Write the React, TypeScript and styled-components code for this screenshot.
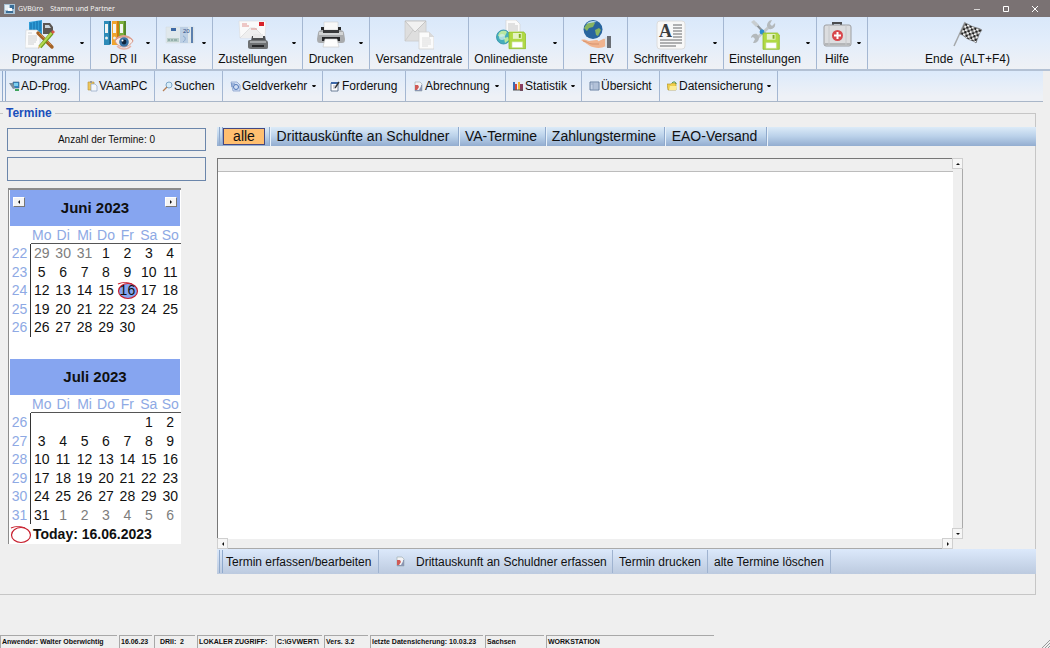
import React from "react";
import styled, { createGlobalStyle } from "styled-components";

const GlobalStyle = createGlobalStyle`
  *, *::before, *::after { box-sizing: border-box; }
  body {
    margin: 0;
    background: #efefef;
    font-family: "Liberation Sans", Arial, sans-serif;
    font-size: 12px;
    line-height: 14px;
    color: #101010;
  }
  button, input { font: inherit; color: inherit; padding: 0; margin: 0; border: 0; background: none; }
  svg { display: block; flex: none; }
`;

const Window = styled.div`
  min-height: 100vh;
  display: flex;
  flex-direction: column;
`;

/* ---------- title bar ---------- */

const TitleBar = styled.header`
  height: 17px;
  flex: none;
  display: flex;
  align-items: center;
  gap: 3px;
  padding-left: 4px;
  background: #7a7273;
  color: #f4f2f2;
  font-family: "Noto Sans", "Open Sans", sans-serif;
  font-size: 7px;
  line-height: 16px;
`;

const TitleText = styled.span`
  margin-right: 4px;
`;

const WindowButtons = styled.div`
  margin-left: auto;
  display: flex;
  padding-right: 1px;
`;

const WindowButton = styled.button`
  width: 29px;
  height: 16px;
  display: flex;
  align-items: center;
  justify-content: center;
`;

/* ---------- main toolbar ---------- */

const MainToolbar = styled.nav`
  display: flex;
  flex: none;
  height: 54px;
  background: linear-gradient(#d9e8fa, #e2edfb 45%, #eff1f5);
  border-bottom: 2px solid #b3c1d4;
`;

const BigButton = styled.button<{ $width: number }>`
  flex: none;
  width: ${(p) => p.$width}px;
  display: flex;
  align-items: center;
  border-right: 1px solid #a4b7d2;
`;

const EndButton = styled.button`
  flex: 1;
  display: flex;
  align-items: center;
  padding-left: 17px;
`;

const BigBody = styled.span`
  flex: 1;
  display: flex;
  flex-direction: column;
  align-items: center;
  gap: 2px;
  white-space: nowrap;
`;

const BigLabel = styled.span<{ $lead?: number }>`
  padding-left: ${(p) => p.$lead ?? 0}px;
  white-space: pre;
`;

const Arrow = styled.span`
  flex: none;
  width: 4px;
  height: 2px;
  margin-right: 6px;
  background: #111;
  clip-path: polygon(0 0, 100% 0, 75% 100%, 25% 100%);
`;

/* ---------- second toolbar ---------- */

const SubToolbar = styled.nav`
  display: flex;
  flex: none;
  height: 31px;
  margin-right: 7px;
  padding-left: 2px;
  background: linear-gradient(#dceafb, #eef1f6 85%);
  border-bottom: 1px solid #a9b6c8;
`;

const Grip = styled.span`
  flex: none;
  width: 4px;
  border-left: 1px solid #8fa9cc;
  border-right: 1px solid #8fa9cc;
`;

const SmallButton = styled.button<{ $width: number; $pad?: number }>`
  flex: none;
  width: ${(p) => p.$width}px;
  display: flex;
  align-items: center;
  gap: 1px;
  padding-left: ${(p) => p.$pad ?? 7}px;
  border-right: 1px solid #a4b7d2;
  white-space: nowrap;

  ${Arrow} { margin-left: auto; }
`;

/* ---------- group box ---------- */

const Group = styled.section`
  flex: 1;
  display: flex;
  flex-direction: column;
  min-width: 0;
  margin: 11px 14px 40px 0;
  padding: 0 0 20px 7px;
  border: 1px solid #c6c6c6;
  border-left: 0;
`;

const GroupTitle = styled.h1`
  align-self: flex-start;
  margin: -9px 0 6px -4px;
  padding: 0 3px;
  background: #efefef;
  font-size: 12px;
  line-height: 16px;
  color: #1c4fbb;
`;

const GroupBody = styled.div`
  flex: 1;
  display: flex;
  gap: 11px;
`;

const SidePanel = styled.aside`
  flex: none;
  width: 199px;
  display: flex;
  flex-direction: column;
  gap: 6px;
  padding-top: 1px;
`;

const CountBox = styled.output`
  height: 23px;
  border: 1px solid #6b86ab;
  font-size: 10px;
  line-height: 21px;
  text-align: center;
`;

const FilterBox = styled.input`
  && {
    height: 24px;
    border: 1px solid #6b86ab;
    outline: 0;
  }
`;

/* ---------- calendar ---------- */

const CalendarBox = styled.section`
  width: 173px;
  margin: 1px 0 0 1px;
  border: 1px solid #8c8c8c;
  border-width: 2px 0 0 1px;
  background: #fff;
  font-size: 14px;
  line-height: 16px;
`;

const MonthHead = styled.div`
  height: 36px;
  display: flex;
  align-items: center;
  margin: 0 1px;
  padding: 0 3px;
  background: #86a5f0;
`;

const MonthName = styled.h2`
  flex: 1;
  margin: 0;
  font-size: 15px;
  line-height: 18px;
  text-align: center;
`;

const MonthNav = styled.button`
  && {
    width: 12px;
    height: 10px;
    margin-bottom: 12px;
    display: flex;
    align-items: center;
    justify-content: center;
    background: #f4f4f4;
    border: 1px solid #fff;
    border-right-color: #777;
    border-bottom-color: #777;
  }
`;

const MonthTable = styled.table`
  width: 172px;
  height: 129px;
  table-layout: fixed;
  border-collapse: separate;
  border-spacing: 0;
  text-align: center;

  th, td { padding: 0; font-weight: normal; }
  thead th { height: 18px; padding-top: 1px; color: #8ea9e4; }
  thead th + th { border-bottom: 1px solid #555; }
  tbody th { color: #8ea9e4; border-right: 1px solid #333; }
  tbody tr.blank th { border-right-color: transparent; }
`;

const WeekCol = styled.col`
  width: 22px;
`;

const Day = styled.td<{ $muted: boolean }>`
  color: ${(p) => (p.$muted ? "#7d7d7d" : "#111")};
`;

const TodayMark = styled.span`
  position: relative;
  display: inline-block;
  z-index: 0;

  svg {
    position: absolute;
    left: -3px;
    top: -2px;
    z-index: -1;
  }
`;

const MonthGap = styled.div`
  height: 4px;
`;

const TodayLine = styled.p`
  display: flex;
  align-items: center;
  gap: 1px;
  height: 20px;
  margin: 0;
  padding-left: 1px;
  font-weight: bold;
`;

/* ---------- right side ---------- */

const ListPanel = styled.div`
  flex: 1;
  min-width: 0;
  display: flex;
  flex-direction: column;
  margin-right: -1px;
`;

const TabStrip = styled.div`
  flex: none;
  display: flex;
  height: 19px;
  margin-bottom: 12px;
  padding-left: 2px;
  background: linear-gradient(#dcebf8, #b9d0e9 50%, #93add0);
  font-size: 14px;
  line-height: 16px;
`;

const Tab = styled.button<{ $width: number }>`
  flex: none;
  width: ${(p) => p.$width}px;
  padding: 0 2px 1px 0;
  border-right: 1px solid #8fa9cc;
  box-shadow: 1px 0 #e8f1fa;
  white-space: nowrap;
`;

const ActiveTab = styled.span`
  display: block;
  margin-right: 2px;
  background: #ffbf70;
  border: 1px solid #45477f;
  line-height: 15px;
`;

const List = styled.div`
  flex: 1;
  display: grid;
  grid-template: minmax(0, 1fr) 10px / minmax(0, 1fr) 10px;
  margin-right: 73px;
  border-top: 1px solid #777;
  border-left: 1px solid #777;
`;

const ListView = styled.div`
  background: #fff;
`;

const ListHeader = styled.div`
  height: 13px;
  background: #efefef;
  border-bottom: 1px solid #bcbcbc;
`;

const ScrollBar = styled.div<{ $vertical?: boolean }>`
  display: flex;
  flex-direction: ${(p) => (p.$vertical ? "column" : "row")};
  justify-content: space-between;
  background: #efefef;
  border: 0 solid #aaa;
  border-width: 0 1px 1px 0;
`;

const ScrollButton = styled.button`
  && {
    width: 9px;
    height: 9px;
    display: flex;
    align-items: center;
    justify-content: center;
    background: #f6f6f6;
    box-shadow: 0 0 0 1px #cfcfcf;
  }
`;

const ActionStrip = styled.div`
  flex: none;
  display: flex;
  height: 25px;
  padding: 1px 0 1px 2px;
  background: linear-gradient(#dce9fb, #bccadf);
`;

const Action = styled.button<{ $width: number; $pad?: number }>`
  flex: none;
  width: ${(p) => p.$width}px;
  display: flex;
  align-items: center;
  gap: 10px;
  padding-left: ${(p) => p.$pad ?? 6}px;
  border-right: 1px solid #9fb3d0;
  white-space: nowrap;
`;

/* ---------- status bar ---------- */

const StatusBar = styled.footer`
  flex: none;
  display: flex;
  gap: 2px;
  height: 13px;
  font-size: 7px;
  font-weight: bold;
  line-height: 12px;
`;

const StatusCell = styled.span<{ $width: number }>`
  flex: none;
  width: ${(p) => p.$width}px;
  padding-left: 1px;
  border-top: 1px solid #a8a8a8;
  border-left: 1px solid #a8a8a8;
  white-space: pre;
`;

const SizeGrip = styled.span`
  margin-left: auto;
  align-self: flex-end;
`;

/* ---------- icons, 30 x 30 ---------- */

const Big = ({ children }: { children: React.ReactNode }) => (
  <svg width="30" height="30" viewBox="0 0 30 30" fill="none" aria-hidden="true">{children}</svg>
);

const ProgramsIcon = () => (
  <Big>
    <path d="M4 2 17 0v14L4 14Z" fill="#2f9cd6" />
    <path d="M6 3v9M9 2v10M12 1v10M15 1v10" stroke="#136ba8" strokeWidth="1" />
    <path d="M18 3h7l3 4v7H18Z" fill="#5b5653" />
    <path d="M20 5h4l2 3h-6Z" fill="#c8d4dc" />
    <path d="M1 10h11l3 3v15H0Z" fill="#fbfbfb" stroke="#cfd3d6" strokeWidth=".6" />
    <path d="M3 13h4M3 16h9M3 18h9M3 20h9M3 22h8M3 24h6" stroke="#c4c7c9" strokeWidth=".8" />
    <path d="m13 13 14 14" stroke="#a46226" strokeWidth="3.4" strokeLinecap="round" />
    <path d="m14 13 12 12" stroke="#d08a43" strokeWidth="1" />
    <path d="m27 13-12 14" stroke="#6c9a1d" strokeWidth="3.8" />
    <path d="m26.500 13-12 14" stroke="#b3d850" strokeWidth="2" />
    <path d="m15 27-2 2 1-4Z" fill="#d8a35a" />
    <path d="m26 12 2-2 2 2-2 2Z" fill="#d85848" />
  </Big>
);

const binders: [string, string, number][] = [
  ["#2d8bb8", "#1a6a92", 0],
  ["#f0a52e", "#c97f13", 8],
  ["#7cae3d", "#57872a", 15],
];

const BindersIcon = () => (
  <Big>
    {binders.map(([front, side, x]) => (
      <g key={x} transform={`translate(${x} 0)`}>
        <path d="M0 1h5v24H0Z" fill={front} />
        <path d="M5 1h2v23l-2 1Z" fill={side} />
        <path d="M1 4h3v9H1Z" fill="#f3f5f2" />
        <circle cx="2.500" cy="18" r="1.500" fill="#e8eeee" />
      </g>
    ))}
    <path d="M11 21c4-6 13-7 18 0-5 8-14 8-18 0Z" fill="#f6ebe7" stroke="#d7998a" strokeWidth="1" />
    <path d="M10 21c4-8 15-8 20 0-5-4-14-5-20 0Z" fill="#dd9c8c" />
    <circle cx="20" cy="22" r="4.800" fill="#3a72a4" />
    <circle cx="20" cy="22" r="2.400" fill="#10243c" />
    <circle cx="18.500" cy="20.500" r="1" fill="#fff" />
    <path d="M13 26c4 4 10 4 14 0" stroke="#e6b2a6" strokeWidth="1.500" />
  </Big>
);

const CashIcon = () => (
  <Big>
    <path d="M1 7h28v16H1Z" fill="#e0e8ec" stroke="#d0dade" strokeWidth=".5" />
    <path d="M15 7h8v16h-8Z" fill="#bccfe4" />
    <path d="M26 7h2v16h-2Z" fill="#5b7fae" />
    <path d="M6 8h5v3H6Z" fill="#3d69a5" />
    <path d="M2 18h12v4H2Z" fill="#b9cdc9" />
    <path d="M3 20h2m1 0h2m1 0h3" stroke="#71918e" />
    <text x="18" y="13" fontSize="6" fill="#2c4d82" fontFamily="Liberation Sans">20</text>
    <path d="M18 16c3 1 3 4 0 6" stroke="#8ba9cc" />
  </Big>
);

const DeliveryIcon = () => (
  <Big>
    <path d="M1 1h27l-1 17H2Z" fill="#fafafa" stroke="#d8dadb" strokeWidth=".6" />
    <path d="m2 18 10-10h5l10 10" fill="#efefef" stroke="#d3d3d3" strokeWidth=".6" />
    <path d="M21 2h5v4h-5Z" fill="#d8232a" />
    <path d="M4 4h5M4 6h7M13 9h6" stroke="#e08b86" strokeWidth=".9" />
    <path d="M14 16h13l1 5H13Z" fill="#4e5052" />
    <path d="M15 14h10v4H15Z" fill="#e9e9e9" />
    <path d="M10 22c0-2 1-2 3-2h14c2 0 3 1 3 3v4c0 2-1 2-3 2H13c-2 0-3-1-3-2Z" fill="#6e7173" />
    <path d="M12 21h16v2H12Z" fill="#a5a8aa" />
    <path d="M14 25h12v2H14Z" fill="#252628" />
  </Big>
);

const PrinterIcon = () => (
  <Big>
    <path d="M8 2h14v8H8Z" fill="#f8f8f8" stroke="#cfcfcf" strokeWidth=".6" />
    <path d="M5 7h3v4h14V7h3v6H5Z" fill="#28292b" />
    <path d="M2 13c0-2 2-3 4-3h2v3h14v-3h2c2 0 4 1 4 3l1 6c0 3-1 4-3 4H4c-2 0-3-1-3-4Z" fill="#a9abad" />
    <path d="M3 12h24v3H3Z" fill="#d2d4d5" />
    <path d="M7 10h16v3H7Z" fill="#38393b" />
    <path d="M6 17h18v4H6Z" fill="#232426" />
    <path d="M9 19h12l2 8H7Z" fill="#fdfdfd" stroke="#c6c6c6" strokeWidth=".6" />
  </Big>
);

const MailIcon = () => (
  <Big>
    <path d="M1 1h21v20H1Z" fill="#dedede" stroke="#cbcbcb" strokeWidth=".8" />
    <path d="m1 1 10 11L22 1Z" fill="#f1f1f1" stroke="#bdbdbd" strokeWidth=".8" />
    <path d="m1 21 8-11m13 11-8-11" stroke="#c8c8c8" strokeWidth=".8" />
    <path d="M15 12h10l5 5v12H15Z" fill="#fbfbfb" stroke="#d2d2d2" strokeWidth=".8" />
    <path d="M25 12v5h5Z" fill="#dadada" />
    <path d="M18 18h8M18 20h9M18 22h9M18 24h9M18 26h6" stroke="#d5d5d5" strokeWidth=".8" />
  </Big>
);

const Floppy = ({ x, y, s = 1 }: { x: number; y: number; s?: number }) => (
  <g transform={`translate(${x} ${y}) scale(${s})`}>
    <path d="M0 0h15l2 2v15H0Z" fill="#b0d944" stroke="#8dbb2b" strokeWidth=".8" />
    <path d="M4 1h9v6H4Z" fill="#e5f3c4" />
    <path d="M10 2h2v4h-2Z" fill="#80ad20" />
    <path d="M3 10h11v6H3Z" fill="#fff" stroke="#bfdc85" strokeWidth=".6" />
  </g>
);

const OnlineIcon = () => (
  <Big>
    <path d="M10 0h10l4 4v12H10Z" fill="#fafafa" stroke="#d2d2d2" strokeWidth=".7" />
    <path d="M12 4h7M12 6h10M12 8h10M12 10h10" stroke="#c1c1c1" strokeWidth=".9" />
    <circle cx="7.500" cy="17" r="7" fill="#46aebb" />
    <path d="M3 13c3-3 6-3 8-1l-2 4-4 1-3-1Zm5 5 4-1 1 3-4 3Z" fill="#b8e7a2" />
    <circle cx="7.500" cy="17" r="7" stroke="#2f8fa8" strokeWidth=".8" />
    <circle cx="6" cy="17" r="3" fill="#d6f1f4" opacity=".7" />
    <Floppy x={13} y={12} s={0.98} />
  </Big>
);

const ErvIcon = () => (
  <Big>
    <circle cx="12" cy="9.500" r="9.500" fill="#28659e" />
    <path d="M5 5c3-4 8-4 9-2l-2 4-4 1-2 3-3-3Zm9 5 4-2 2 2-3 6-2-1Z" fill="#86b462" />
    <path d="M5 4c3-3 8-4 11-2-4 0-8 1-11 2Z" fill="#b8daf2" />
    <path d="M0 20c3-1 5 0 8 1l7-1c3 0 3 2 1 2l6-3c3-1 3 1 2 2l1-1v6c-5 3-12 2-16 0Z" fill="#f0b48f" />
    <path d="M2 21c3 0 6 3 9 3h7" stroke="#d18c66" strokeWidth=".8" />
    <path d="M24 17h3v10h-3Z" fill="#dfe3e6" />
    <path d="M26 16h4v12h-4Z" fill="#6b6f75" />
  </Big>
);

const LetterIcon = () => (
  <Big>
    <rect x="1" y="1" width="28" height="28" rx="3" fill="#f8f8f8" stroke="#dcdcdc" />
    <text x="3" y="17" fontSize="18" fontWeight="bold" fill="#3b3d3f" fontFamily="Liberation Serif">A</text>
    <path d="M17 5h9M17 8h9M17 11h9M17 14h9M17 17h9M4 20h22M4 23h22M4 26h16" stroke="#66686a" strokeWidth="1.200" />
  </Big>
);

const SettingsIcon = () => (
  <Big>
    <path d="m5 3 16 17" stroke="#8d9397" strokeWidth="2.200" />
    <path d="M20 6 6 19" stroke="#c3c7c9" strokeWidth="3" />
    <path d="M17 6c0-3 2-6 5-6l-2 4 2 2 3-3c1 4-2 7-6 6M1 18c0-3 3-5 6-4l2 3c0 4-2 6-6 6l2-4-2-2Z" fill="#b4b9bc" />
    <path d="M1 2 4 0l5 5-3 2Z" fill="#c8cdd0" />
    <circle cx="12" cy="12" r="2.400" fill="#2c8fd0" />
    <Floppy x={13} y={13} s={0.96} />
  </Big>
);

const HelpIcon = () => (
  <Big>
    <path d="M11 5V3h8v2" stroke="#4b4d50" strokeWidth="2" />
    <rect x="2" y="5" width="27" height="21" rx="2" fill="#dcdddf" stroke="#9c9ea1" />
    <path d="M3 23h25v2H3Z" fill="#b4b6b8" />
    <path d="M7 5v20M24 5v20" stroke="#c6c8ca" />
    <circle cx="15.500" cy="15.500" r="5.500" fill="#d8474c" />
    <path d="M15.500 12v7M12 15.500h7" stroke="#fff" strokeWidth="2" />
  </Big>
);

const FlagIcon = () => (
  <Big>
    <defs>
      <pattern id="checker" width="5" height="5" patternUnits="userSpaceOnUse" patternTransform="rotate(24)">
        <rect width="5" height="5" fill="#f1f1f1" />
        <path d="M0 0h2.500v2.500H0ZM2.500 2.500H5V5H2.500Z" fill="#222" />
      </pattern>
    </defs>
    <path d="M12 2 1 26" stroke="#a5a8aa" strokeWidth="1.500" />
    <path d="M12 3c4 1 5 3 9 4 3 1 5 1 8 3-3 3-4 8-6 13-3-3-5-2-8-4-3-1-4-4-8-5Z" fill="url(#checker)" stroke="#555" strokeWidth=".5" />
  </Big>
);

/* ---------- icons, 11 x 11 ---------- */

const Small = ({ children }: { children: React.ReactNode }) => (
  <svg width="11" height="11" viewBox="0 0 11 11" fill="none" aria-hidden="true">{children}</svg>
);

const smallIcons: Record<string, React.ReactNode> = {
  ad: <Small><path d="M4 1h6v6H4Z" fill="#2e86c9" stroke="#48657c" strokeWidth=".6" /><path d="M5 2h4v3H5Z" fill="#7cd0f0" /><path d="M0 2h4l2 5-2 1Z" fill="#7b8e9c" /><path d="M6 8h4v2H6Z" fill="#3fa45c" /></Small>,
  paste: <Small><path d="M1 1h6v8H1Z" fill="#edc75c" stroke="#b8923a" strokeWidth=".6" /><path d="M3 0h2v2H3Z" fill="#999" /><path d="M4 3h4l2 2v5H4Z" fill="#f3f7fc" stroke="#8098b8" strokeWidth=".6" /></Small>,
  search: <Small><circle cx="7" cy="4" r="3" fill="#d7edfa" stroke="#7ca6c8" /><path d="M5 6 1 10" stroke="#b77f55" strokeWidth="1.300" /></Small>,
  money: <Small><path d="M1 1h6l3 3v6H3Z" fill="#d2dff3" stroke="#7c96c6" strokeWidth=".7" /><circle cx="6" cy="6" r="2.500" stroke="#5076b8" /><path d="M1 3h4M1 5h2" stroke="#5076b8" strokeWidth=".8" /></Small>,
  edit: <Small><path d="M1 2h7v8H1Z" fill="#fff" stroke="#4a5f7d" strokeWidth=".8" /><path d="M1 1h7v2H1Z" fill="#3f69a8" /><path d="m5 7 4-6" stroke="#333" strokeWidth="1.400" /><path d="M3 5h3M3 7h2" stroke="#889" strokeWidth=".7" /></Small>,
  report: <Small><path d="M2 1h5l2 2v7H2Z" fill="#f3f3f6" stroke="#9aa" strokeWidth=".6" /><path d="M2 4h3l1 2-2 3H2Z" fill="#cf5a55" /><path d="M7 7c1-1 1-2 1-3h1v6H2V9h4Z" fill="#8a96b2" /></Small>,
  chart: <Small><path d="M0 1h2v8H0Z" fill="#3d6cb5" /><path d="M2 3h2v6H2Z" fill="#d6443b" /><path d="M5 1h2v8H5Z" fill="#efb63b" /><path d="M7 3h3v7H7Z" fill="#8a3e60" /><path d="M0 9h10" stroke="#555" /></Small>,
  table: <Small><path d="M1 1h9v8H1Z" fill="#c6d3e6" stroke="#5e7698" strokeWidth=".9" /><path d="M1 3h9M4 1v8M4 5h6M4 7h6" stroke="#8ca0bd" strokeWidth=".7" /></Small>,
  backup: <Small><path d="M0 3h4l1-1h4v7H1Z" fill="#efcf4c" stroke="#a98a22" strokeWidth=".6" /><path d="M3 5h7l-1 4H2Z" fill="#fbec97" /><path d="M5 2c2-2 4-1 4 1" stroke="#3b8b3b" /></Small>,
};

const Ring = ({ filled }: { filled?: boolean }) => (
  <svg width="22" height="20" viewBox="0 0 22 20" fill="none" aria-hidden="true">
    <ellipse cx="11" cy="11" rx="9.500" ry="7.500" fill={filled ? "#86a5f0" : "none"} stroke="#c8202f" strokeWidth="1.200" />
    <path d="M1 4c4-2 10-2 14 0" stroke="#c8202f" strokeWidth="1.200" />
  </svg>
);

const Tri = ({ d }: { d: string }) => (
  <svg width="4" height="4" viewBox="0 0 4 4" aria-hidden="true"><path d={d} fill="#111" /></svg>
);
const UP = "M0 3h4L2 1Z";
const DOWN = "M0 1h4L2 3Z";
const LEFT = "M3 0v4L1 2Z";
const RIGHT = "M1 0v4l2-2Z";

/* ---------- data ---------- */

const mainItems = [
  { label: "Programme", width: 91, icon: <ProgramsIcon />, arrow: true, lead: 6 },
  { label: "DR II", width: 66, icon: <BindersIcon />, arrow: true, lead: 10 },
  { label: "Kasse", width: 56, icon: <CashIcon />, arrow: true },
  { label: "Zustellungen", width: 90, icon: <DeliveryIcon />, arrow: true },
  { label: "Drucken", width: 67, icon: <PrinterIcon />, arrow: true },
  { label: "Versandzentrale", width: 99, icon: <MailIcon /> },
  { label: "Onlinedienste", width: 95, icon: <OnlineIcon />, arrow: true },
  { label: "ERV", width: 64, icon: <ErvIcon />, lead: 12 },
  { label: "Schriftverkehr", width: 96, icon: <LetterIcon />, arrow: true },
  { label: "Einstellungen", width: 93, icon: <SettingsIcon />, arrow: true },
  { label: "Hilfe", width: 51, icon: <HelpIcon />, arrow: true },
];

const subItems = [
  { label: "AD-Prog.", width: 74, icon: "ad", pad: 3 },
  { label: "VAamPC", width: 75, icon: "paste" },
  { label: "Suchen", width: 68, icon: "search" },
  { label: "Geldverkehr", width: 100, icon: "money", arrow: true },
  { label: "Forderung", width: 83, icon: "edit" },
  { label: "Abrechnung", width: 100, icon: "report", arrow: true },
  { label: "Statistik", width: 76, icon: "chart", arrow: true },
  { label: "Übersicht", width: 78, icon: "table" },
  { label: "Datensicherung", width: 118, icon: "backup", arrow: true },
];

const tabs = [
  { label: "Drittauskünfte an Schuldner", width: 189 },
  { label: "VA-Termine", width: 87 },
  { label: "Zahlungstermine", width: 119 },
  { label: "EAO-Versand", width: 102 },
];

const statusItems: [string, number][] = [
  ["Anwender: Walter Oberwichtig", 117],
  ["16.06.23", 33],
  ["  DRII:  2", 41],
  ["LOKALER ZUGRIFF:", 76],
  ["C:\\GVWERT\\", 47],
  ["Vers. 3.2", 44],
  ["letzte Datensicherung: 10.03.23", 113],
  ["Sachsen", 59],
  ["WORKSTATION", 168],
];

type MonthData = { name: string; firstWeek: number; start: number; days: number; prev: number; trail: number; today?: number };

const months: MonthData[] = [
  { name: "Juni 2023", firstWeek: 22, start: 3, days: 30, prev: 31, trail: 0, today: 16 },
  { name: "Juli 2023", firstWeek: 26, start: 5, days: 31, prev: 0, trail: 6 },
];

const Month = ({ m, nav }: { m: MonthData; nav?: boolean }) => (
  <>
    <MonthHead>
      {nav && <MonthNav aria-label="Vorheriger Monat"><Tri d={LEFT} /></MonthNav>}
      <MonthName>{m.name}</MonthName>
      {nav && <MonthNav aria-label="Nächster Monat"><Tri d={RIGHT} /></MonthNav>}
    </MonthHead>
    <MonthTable aria-label={m.name}>
      <colgroup><WeekCol /></colgroup>
      <thead>
        <tr><th />{["Mo", "Di", "Mi", "Do", "Fr", "Sa", "So"].map((d) => <th key={d}>{d}</th>)}</tr>
      </thead>
      <tbody>
        {Array.from({ length: 6 }, (_, w) => {
          const blank = w * 7 - m.start >= m.days;
          return (
            <tr key={w} className={blank ? "blank" : undefined}>
              <th>{blank ? "\u00a0" : m.firstWeek + w}</th>
              {Array.from({ length: 7 }, (_, i) => {
                const n = w * 7 + i - m.start + 1;
                const before = n < 1;
                const after = n > m.days;
                let text: number | string = n;
                if (before) text = m.prev ? m.prev + n : "";
                if (after) text = n - m.days <= m.trail ? n - m.days : "";
                return (
                  <Day key={i} $muted={before || after}>
                    {n === m.today ? <TodayMark>{text}<Ring filled /></TodayMark> : text}
                  </Day>
                );
              })}
            </tr>
          );
        })}
      </tbody>
    </MonthTable>
  </>
);

export default function App() {
  return (
    <Window>
      <GlobalStyle />
      <TitleBar>
        <svg width="11" height="12" viewBox="0 0 11 12" aria-hidden="true">
          <path d="M0 1h11v10H0Z" fill="#a9c3d6" />
          <path d="M1 2h4v5H1Z" fill="#e8f0f5" />
          <path d="M6 2h4v4H6ZM2 8h7v2H2Z" fill="#3a6e98" />
          <path d="M4 5h4v3H4Z" fill="#fff" />
        </svg>
        <TitleText>GVBüro</TitleText>
        <TitleText>Stamm und Partner</TitleText>
        <WindowButtons>
          <WindowButton aria-label="Minimieren">
            <svg width="8" height="8" viewBox="0 0 8 8"><path d="M1 4.500h6" stroke="#d9d6d6" /></svg>
          </WindowButton>
          <WindowButton aria-label="Maximieren">
            <svg width="8" height="8" viewBox="0 0 8 8"><path d="M1.500 1.500h5v5h-5Z" stroke="#fff" fill="none" /></svg>
          </WindowButton>
          <WindowButton aria-label="Schließen">
            <svg width="8" height="8" viewBox="0 0 8 8"><path d="m1 1 6 6M7 1 1 7" stroke="#fff" /></svg>
          </WindowButton>
        </WindowButtons>
      </TitleBar>

      <MainToolbar>
        {mainItems.map((it) => (
          <BigButton key={it.label} $width={it.width}>
            <BigBody>{it.icon}<BigLabel $lead={it.lead}>{it.label}</BigLabel></BigBody>
            {it.arrow && <Arrow />}
          </BigButton>
        ))}
        <EndButton>
          <BigBody><FlagIcon /><BigLabel>{"Ende  (ALT+F4)"}</BigLabel></BigBody>
        </EndButton>
      </MainToolbar>

      <SubToolbar>
        <Grip />
        {subItems.map((it) => (
          <SmallButton key={it.label} $width={it.width} $pad={it.pad}>
            {smallIcons[it.icon]}
            {it.label}
            {it.arrow && <Arrow />}
          </SmallButton>
        ))}
      </SubToolbar>

      <Group aria-labelledby="group-title">
        <GroupTitle id="group-title">Termine</GroupTitle>
        <GroupBody>
          <SidePanel>
            <CountBox>Anzahl der Termine: 0</CountBox>
            <FilterBox type="text" aria-label="Termin" readOnly />
            <CalendarBox>
              <Month m={months[0]} nav />
              <MonthGap />
              <Month m={months[1]} />
              <TodayLine><Ring />Today: 16.06.2023</TodayLine>
            </CalendarBox>
          </SidePanel>

          <ListPanel>
            <TabStrip>
              <Grip />
              <Tab $width={47}><ActiveTab>alle</ActiveTab></Tab>
              {tabs.map((t) => <Tab key={t.label} $width={t.width}>{t.label}</Tab>)}
            </TabStrip>
            <List>
              <ListView><ListHeader /></ListView>
              <ScrollBar $vertical>
                <ScrollButton aria-label="Nach oben"><Tri d={UP} /></ScrollButton>
                <ScrollButton aria-label="Nach unten"><Tri d={DOWN} /></ScrollButton>
              </ScrollBar>
              <ScrollBar>
                <ScrollButton aria-label="Nach links"><Tri d={LEFT} /></ScrollButton>
                <ScrollButton aria-label="Nach rechts"><Tri d={RIGHT} /></ScrollButton>
              </ScrollBar>
            </List>
            <ActionStrip>
              <Grip />
              <Action $width={156} $pad={3}>Termin erfassen/bearbeiten</Action>
              <Action $width={234} $pad={16}>{smallIcons.report}Drittauskunft an Schuldner erfassen</Action>
              <Action $width={95}>Termin drucken</Action>
              <Action $width={123}>alte Termine löschen</Action>
            </ActionStrip>
          </ListPanel>
        </GroupBody>
      </Group>

      <StatusBar>
        {statusItems.map(([text, width]) => <StatusCell key={text} $width={width}>{text}</StatusCell>)}
        <SizeGrip>
          <svg width="8" height="8" viewBox="0 0 8 8"><path d="M0 8 8 0M3 8l5-5M6 8l2-2" stroke="#999" /></svg>
        </SizeGrip>
      </StatusBar>
    </Window>
  );
}
